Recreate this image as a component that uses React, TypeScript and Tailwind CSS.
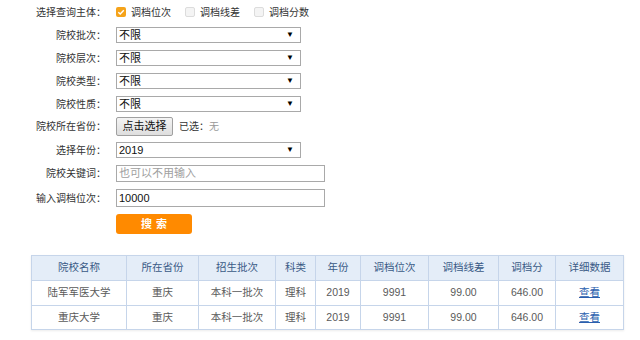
import React from 'react';

const FONT = "font-['Liberation_Sans','Noto_Sans_CJK_SC',sans-serif]";

const columns = [
  { title: '院校名称', w: 'w-[95px]' },
  { title: '所在省份', w: 'w-[72px]' },
  { title: '招生批次', w: 'w-[77px]' },
  { title: '科类', w: 'w-[40px]' },
  { title: '年份', w: 'w-[45px]' },
  { title: '调档位次', w: 'w-[68px]' },
  { title: '调档线差', w: 'w-[70px]' },
  { title: '调档分', w: 'w-[57px]' },
  { title: '详细数据', w: 'w-[68px]' },
];

const rows = [
  ['陆军军医大学', '重庆', '本科一批次', '理科', '2019', '9991', '99.00', '646.00'],
  ['重庆大学', '重庆', '本科一批次', '理科', '2019', '9991', '99.00', '646.00'],
];

function Label({ children }: { children: React.ReactNode }) {
  return (
    <div className="w-[106px] shrink-0 text-right text-[10px] text-[#333]">{children}</div>
  );
}

function FakeSelect({ value }: { value: string }) {
  return (
    <div className="ml-[10px] flex h-[16px] w-[185px] items-center justify-between border border-[#a9a9a9] bg-white pl-[2px] pr-[6px] text-[11px] leading-none text-[#111]">
      <span>{value}</span>
      <span className="text-[8px] text-black">▼</span>
    </div>
  );
}

function Check({ checked, label }: { checked?: boolean; label: string }) {
  return (
    <div className="flex items-center">
      {checked ? (
        <span className="flex h-[10px] w-[10px] items-center justify-center rounded-[2px] bg-[#f5a31a]">
          <svg width="8" height="8" viewBox="0 0 8 8">
            <path d="M1.3 4.2 L3.2 6 L6.8 2.2" stroke="#fff" strokeWidth="1.4" fill="none" />
          </svg>
        </span>
      ) : (
        <span className="h-[10px] w-[10px] rounded-[2px] border border-[#dcdcdc] bg-[#f4f4f4]" />
      )}
      <span className="ml-[5px] text-[10px] text-[#333]">{label}</span>
    </div>
  );
}

export default function App() {
  return (
    <div className={`h-[340px] w-[640px] overflow-hidden bg-white ${FONT}`}>
      <div className="flex flex-col pt-[2px]">
        <div className="flex h-[20px] items-center">
          <Label>选择查询主体：</Label>
          <div className="ml-[10px] flex items-center gap-[14px]">
            <Check checked label="调档位次" />
            <Check label="调档线差" />
            <Check label="调档分数" />
          </div>
        </div>

        <div className="mt-[5px] flex items-center">
          <Label>院校批次：</Label>
          <FakeSelect value="不限" />
        </div>
        <div className="mt-[7px] flex items-center">
          <Label>院校层次：</Label>
          <FakeSelect value="不限" />
        </div>
        <div className="mt-[7px] flex items-center">
          <Label>院校类型：</Label>
          <FakeSelect value="不限" />
        </div>
        <div className="mt-[7px] flex items-center">
          <Label>院校性质：</Label>
          <FakeSelect value="不限" />
        </div>

        <div className="mt-[5px] flex items-center">
          <Label>院校所在省份：</Label>
          <div className="ml-[10px] flex h-[19px] w-[57px] items-center justify-center rounded-[2px] border border-[#a0a0a0] bg-gradient-to-b from-[#f4f4f4] to-[#dedede] text-[11px] text-[#111]">
            点击选择
          </div>
          <span className="ml-[6px] text-[10px] text-[#333]">已选：</span>
          <span className="text-[10px] text-[#999]">无</span>
        </div>

        <div className="mt-[6px] flex items-center">
          <Label>选择年份：</Label>
          <FakeSelect value="2019" />
        </div>

        <div className="mt-[7px] flex items-center">
          <Label>院校关键词：</Label>
          <div className="ml-[10px] flex h-[17px] w-[209px] items-center border border-[#a9a9a9] bg-white pl-[2px] text-[11px] text-[#a0a0a0]">
            也可以不用输入
          </div>
        </div>

        <div className="mt-[7px] flex items-center">
          <Label>输入调档位次：</Label>
          <div className="ml-[10px] flex h-[18px] w-[209px] items-center border border-[#a9a9a9] bg-white pl-[2px] text-[11px] text-[#111]">
            10000
          </div>
        </div>

        <div className="mt-[7px] flex items-center">
          <div className="w-[106px] shrink-0" />
          <div className="ml-[10px] flex h-[20px] w-[76px] items-center justify-center rounded-[3px] bg-[#ff8a00] pl-[4px] text-[11px] font-bold tracking-[4px] text-white">
            搜索
          </div>
        </div>
      </div>

      <div className="ml-[31px] mt-[21px] w-[592px]">
        <table className="w-[592px] table-fixed border-collapse border border-[#c6d5ea] text-[10.5px] shadow-[0_1px_2px_rgba(0,0,0,0.08)]">
          <thead>
            <tr className="h-[25px] bg-[#e4edf8]">
              {columns.map((c) => (
                <th key={c.title} className={`${c.w} border border-[#c6d5ea] text-center font-normal text-[#3a5a86]`}>
                  {c.title}
                </th>
              ))}
            </tr>
          </thead>
          <tbody>
            {rows.map((r, i) => (
              <tr key={i} className={i === 0 ? 'h-[25px]' : 'h-[24px]'}>
                {r.map((cell, j) => (
                  <td key={j} className="border border-[#c6d5ea] text-center text-[#5a5a5a]">
                    {cell}
                  </td>
                ))}
                <td className="border border-[#c6d5ea] text-center">
                  <span className="text-[#2b5fae] underline">查看</span>
                </td>
              </tr>
            ))}
          </tbody>
        </table>
      </div>
    </div>
  );
}
